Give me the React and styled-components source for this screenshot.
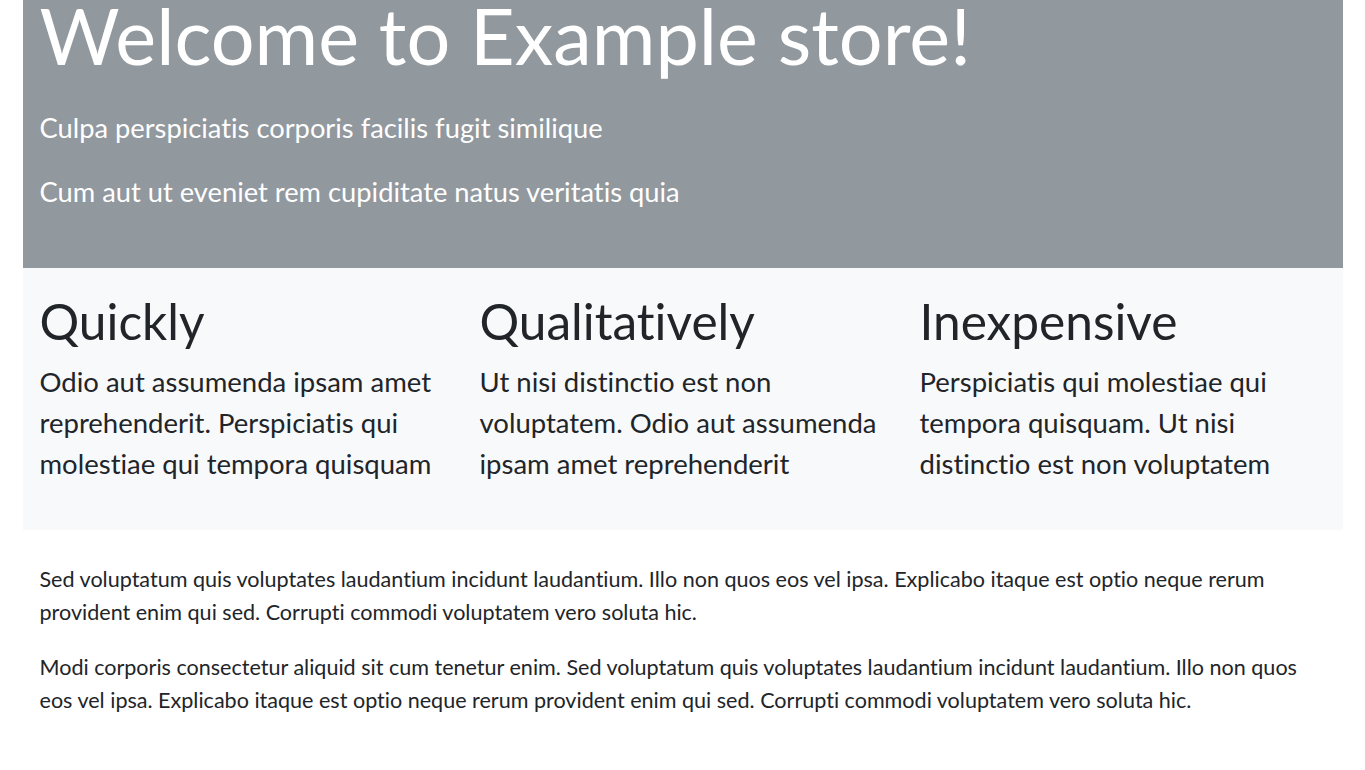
import React from "react";
import styled, { createGlobalStyle } from "styled-components";

const GlobalStyle = createGlobalStyle`
  html, body {
    margin: 0;
    padding: 0;
    background: #ffffff;
  }
  body {
    font-family: "Lato", "Roboto", sans-serif;
    color: #212529;
    font-variant-ligatures: none;
    font-feature-settings: "liga" 0, "clig" 0;
    -webkit-font-smoothing: antialiased;
  }
  * { box-sizing: border-box; }
`;

const Container = styled.main`
  width: 1320px;
  margin: 0 auto;
`;

const Hero = styled.header`
  background: #91989e;
  color: #ffffff;
  padding: 0 16px 56px 17px;
`;

const Title = styled.h1`
  margin: -5px 0 0;
  font-size: 77.4px;
  line-height: 80px;
  font-weight: 400;
  letter-spacing: 0;
`;

const Lead = styled.p`
  margin: ${(p) => (p.$first ? "33px" : "24px")} 0 0;
  font-size: 27.3px;
  line-height: 40px;
  font-weight: 400;
`;

const Features = styled.section`
  background: #f8f9fa;
  display: grid;
  grid-template-columns: repeat(3, 1fr);
  padding: 23px 0 46px;
`;

const Feature = styled.article`
  padding: 0 16px 0 17px;
  display: flex;
  flex-direction: column;
  gap: 10px;
`;

const FeatureTitle = styled.h2`
  margin: 0;
  font-size: 49.6px;
  line-height: 60px;
  font-weight: 400;
`;

const FeatureText = styled.p`
  margin: 0;
  font-size: 27.5px;
  line-height: 41px;
`;

const Body = styled.section`
  padding: 33px 16px 40px 17px;
  display: flex;
  flex-direction: column;
  gap: 22px;
`;

const Paragraph = styled.p`
  margin: 0;
  font-size: 21.55px;
  line-height: 33px;
`;

const features = [
  {
    title: "Quickly",
    text: "Odio aut assumenda ipsam amet reprehenderit. Perspiciatis qui molestiae qui tempora quisquam",
  },
  {
    title: "Qualitatively",
    text: "Ut nisi distinctio est non voluptatem. Odio aut assumenda ipsam amet reprehenderit",
  },
  {
    title: "Inexpensive",
    text: "Perspiciatis qui molestiae qui tempora quisquam. Ut nisi distinctio est non voluptatem",
  },
];

export default function App() {
  return (
    <>
      <GlobalStyle />
      <Container>
        <Hero>
          <Title>Welcome to Example store!</Title>
          <Lead $first>Culpa perspiciatis corporis facilis fugit similique</Lead>
          <Lead>Cum aut ut eveniet rem cupiditate natus veritatis quia</Lead>
        </Hero>
        <Features>
          {features.map((f) => (
            <Feature key={f.title}>
              <FeatureTitle>{f.title}</FeatureTitle>
              <FeatureText>{f.text}</FeatureText>
            </Feature>
          ))}
        </Features>
        <Body>
          <Paragraph>
            Sed voluptatum quis voluptates laudantium incidunt laudantium. Illo non quos eos vel ipsa. Explicabo itaque est optio neque rerum provident enim qui sed. Corrupti commodi voluptatem vero soluta hic.
          </Paragraph>
          <Paragraph>
            Modi corporis consectetur aliquid sit cum tenetur enim. Sed voluptatum quis voluptates laudantium incidunt laudantium. Illo non quos eos vel ipsa. Explicabo itaque est optio neque rerum provident enim qui sed. Corrupti commodi voluptatem vero soluta hic.
          </Paragraph>
        </Body>
      </Container>
    </>
  );
}
